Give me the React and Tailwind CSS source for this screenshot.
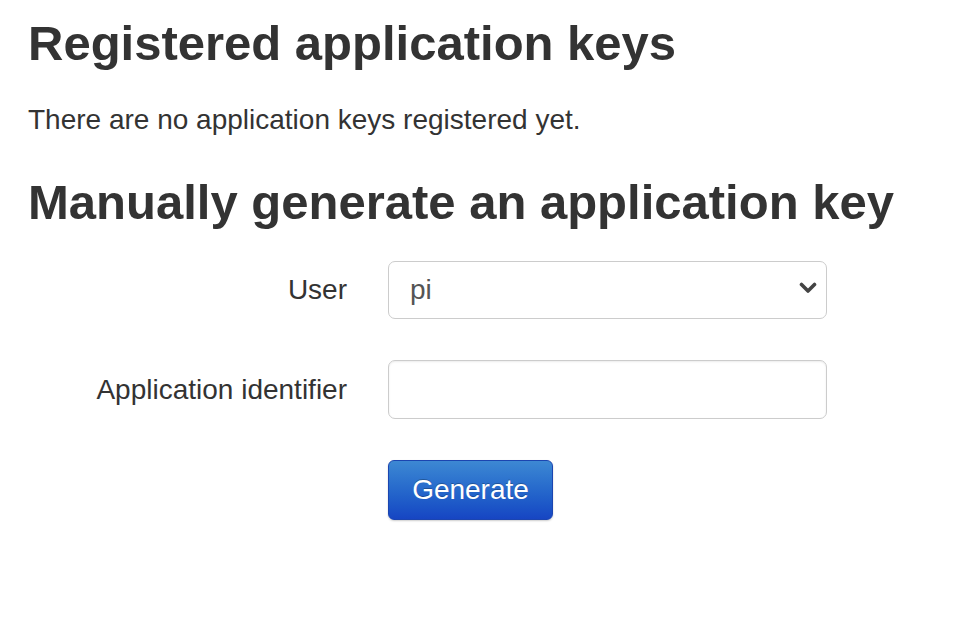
import React from 'react';

const App = () => {
    return (
        <div className="min-h-[630px] bg-white pl-[28px] pt-[15px] text-[#333] font-['Liberation_Sans',Arial,sans-serif]">
            <h2 className="text-[49px] leading-[56px] font-bold">Registered application keys</h2>
            <p className="mt-[32px] text-[28px] leading-[34px]">There are no application keys registered yet.</p>

            <h2 className="mt-[37px] text-[49px] leading-[56px] font-bold">Manually generate an application key</h2>

            {/* Key form */}
            <form className="mt-[31px] grid grid-cols-[319px_439px] gap-x-[41px] gap-y-[41px] items-center" onSubmit={e => e.preventDefault()}>
                <label className="text-right text-[28px] leading-[34px]">User</label>
                <div className="relative">
                    <select className="w-full h-[58px] appearance-none rounded-[7px] border border-[#ccc] bg-white pl-[21px] pr-[50px] text-[28px] text-[#555] outline-none">
                        <option>pi</option>
                    </select>
                    <svg className="absolute right-[10px] top-[21px] pointer-events-none" width="18" height="12" viewBox="0 0 18 12">
                        <path d="M2.5 2.5 L9 9 L15.5 2.5" fill="none" stroke="#444" strokeWidth="3.6" strokeLinecap="round" strokeLinejoin="round" />
                    </svg>
                </div>

                <label className="text-right text-[28px] leading-[34px]">Application identifier</label>
                <input type="text" className="w-full h-[59px] rounded-[7px] border border-[#ccc] bg-white px-[21px] text-[28px] text-[#555] outline-none shadow-[inset_0_1px_2px_rgba(0,0,0,0.08)]" />

                <div />
                <div>
                    <button type="submit" className="h-[60px] w-[165px] rounded-[6px] border border-[#1b45b0] bg-linear-to-b from-[#3d88d3] to-[#1745c3] text-[28px] text-white [text-shadow:0_-1px_0_rgba(0,0,0,0.25)] shadow-[0_1px_2px_rgba(0,0,0,0.2)]">
                        Generate
                    </button>
                </div>
            </form>
        </div>
    );
};

export default App;
